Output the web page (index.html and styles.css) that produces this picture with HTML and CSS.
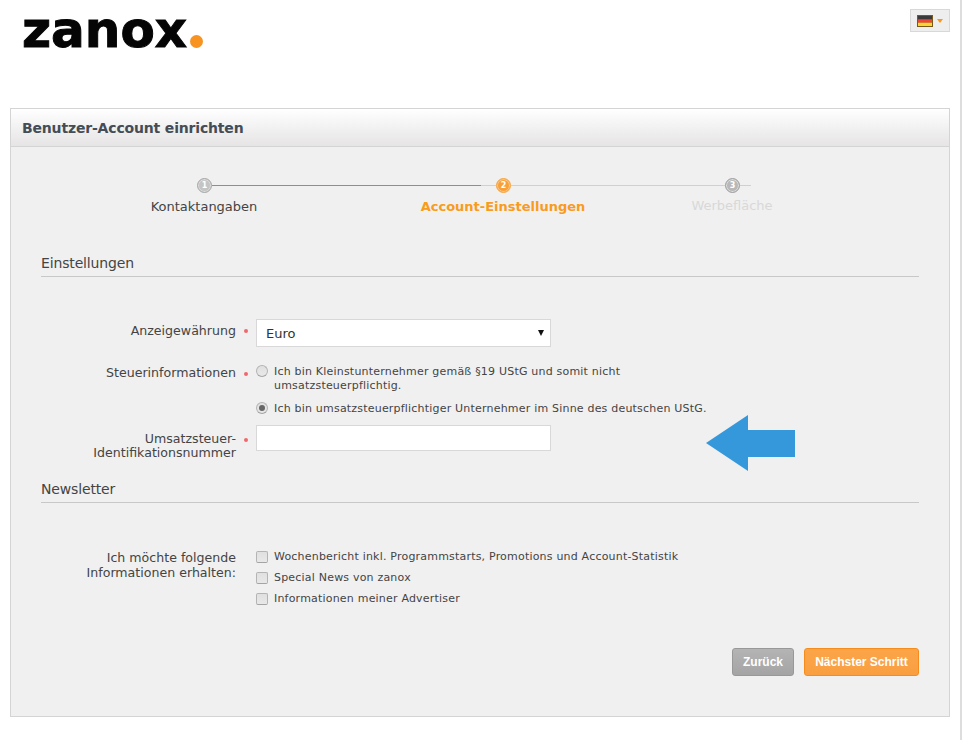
FILE: index.html
```html
<!DOCTYPE html>
<html lang="de">
<head>
<meta charset="utf-8">
<title>Benutzer-Account einrichten</title>
<link rel="stylesheet" href="styles.css">
</head>
<body>
<div class="page">
  <header class="top">
    <div class="logo"><span class="logo-word">zanox</span><span class="logo-dot"></span></div>
    <button class="lang" type="button" aria-label="Deutsch">
      <svg class="flag" width="16" height="12" viewBox="0 0 16 12">
        <rect width="16" height="12" fill="#7a5a1c"/>
        <rect x="1" y="1" width="14" height="3.4" fill="#3a3a3a"/>
        <rect x="1" y="4.4" width="14" height="3.3" fill="#f04438"/>
        <rect x="1" y="7.7" width="14" height="3.3" fill="#f7d634"/>
      </svg>
      <span class="caret"></span>
    </button>
  </header>

  <main class="panel">
    <h1 class="panel-title">Benutzer-Account einrichten</h1>
    <div class="panel-body">
      <div class="track">
        <span class="dot dot-done">1</span>
        <span class="line line-done"></span>
        <span class="line line-todo line-short"></span>
        <span class="dot dot-active">2</span>
        <span class="line line-todo line-mid"></span>
        <span class="dot dot-todo">3</span>
        <span class="line line-todo line-tail"></span>
      </div>
      <div class="step-labels">
        <span class="step step-a">Kontaktangaben</span>
        <span class="step step-b">Account-Einstellungen</span>
        <span class="step step-c">Werbefläche</span>
      </div>

      <h2 class="section section-first">Einstellungen</h2>

      <div class="row row-currency">
        <div class="label">Anzeigewährung</div>
        <span class="req"></span>
        <div class="select-wrap">
          <select class="select"><option>Euro</option></select>
        </div>
      </div>

      <div class="row row-tax">
        <div class="label">Steuerinformationen</div>
        <span class="req"></span>
        <div class="options">
          <label class="option"><input class="radio" type="radio" name="tax"><span>Ich bin Kleinstunternehmer gemäß §19 UStG und somit nicht<br>umsatzsteuerpflichtig.</span></label>
          <label class="option"><input class="radio" type="radio" name="tax" checked><span>Ich bin umsatzsteuerpflichtiger Unternehmer im Sinne des deutschen UStG.</span></label>
        </div>
      </div>

      <div class="row row-vat">
        <div class="label">Umsatzsteuer-<br>Identifikationsnummer</div>
        <span class="req"></span>
        <input class="text" type="text">
      </div>

      <h2 class="section section-news">Newsletter</h2>

      <div class="row row-news">
        <div class="label">Ich möchte folgende<br>Informationen erhalten:</div>
        <span class="req-empty"></span>
        <div class="checks">
          <label class="option"><input class="check" type="checkbox"><span>Wochenbericht inkl. Programmstarts, Promotions und Account-Statistik</span></label>
          <label class="option"><input class="check" type="checkbox"><span>Special News von zanox</span></label>
          <label class="option"><input class="check" type="checkbox"><span>Informationen meiner Advertiser</span></label>
        </div>
      </div>

      <div class="actions">
        <button class="btn btn-back" type="button">Zurück</button>
        <button class="btn btn-next" type="button">Nächster Schritt</button>
      </div>
    </div>
  </main>

  <svg class="arrow" width="90" height="57" viewBox="0 0 90 57">
    <polygon points="0,28 42,0 42,15 89,15 89,42 42,42 42,56" fill="#3498db"/>
  </svg>
</div>
</body>
</html>
```

FILE: styles.css
```css
* { box-sizing: border-box; }

html, body {
  margin: 0;
  padding: 0;
  background: #fff;
}

body {
  font-family: "DejaVu Sans", Verdana, sans-serif;
  color: #444;
}

.page {
  position: relative;
  width: 962px;
  height: 740px;
  border-right: 2px solid #ddd;
  overflow: hidden;
}

.top {
  height: 108px;
  display: flex;
  justify-content: space-between;
  align-items: flex-start;
  padding: 9px 10px 0 22px;
}

.logo {
  display: flex;
  align-items: flex-start;
  margin-top: -4px;
}

.logo-word {
  font-family: "DejaVu Sans", sans-serif;
  font-weight: 700;
  font-size: 50px;
  line-height: 50px;
  color: #050505;
  -webkit-text-stroke: 1px #050505;
  letter-spacing: 0;
}

.logo-dot {
  width: 13px;
  height: 13px;
  margin: 30px 0 0 3px;
  border-radius: 50%;
  background: #f7931e;
}

.lang {
  width: 40px;
  height: 23px;
  padding: 0 0 0 6px;
  display: flex;
  align-items: center;
  gap: 4px;
  background: #eee;
  border: 1px solid #d8d8d8;
}

.flag { display: block; }

.caret {
  width: 0;
  height: 0;
  border-style: solid;
  border-width: 4px 3.5px 0;
  border-color: #f79a1e transparent transparent;
}

.panel {
  width: 940px;
  height: 609px;
  margin-left: 10px;
  background: #f0f0f0;
  border: 1px solid #d4d4d4;
}

.panel-title {
  height: 38px;
  margin: 0;
  padding: 0 11px;
  font-size: 14px;
  font-weight: 700;
  line-height: 38px;
  letter-spacing: -0.17px;
  color: #444c56;
  background: linear-gradient(#ffffff, #e6e4e4);
  border-bottom: 1px solid #d4d4d4;
}

.panel-body {
  padding: 31px 30px 0;
}

.track {
  display: flex;
  align-items: center;
  height: 15px;
  margin-left: 156px;
}

.dot {
  flex: none;
  width: 15px;
  height: 15px;
  border-radius: 50%;
  border: 1px solid #a8a8a8;
  background: #c4c4c4;
  box-shadow: inset 0 0 0 1px #dedede;
  color: #fff;
  font-size: 8px;
  font-weight: 700;
  line-height: 13px;
  text-align: center;
}

.dot-active {
  border-color: #f5a84a;
  background: #fa9f36;
  box-shadow: inset 0 0 0 1px #fcc98a;
}

.dot-todo {
  background: #b8b8b8;
  border-color: #a0a0a0;
}

.line { height: 1px; flex: none; }
.line-done { width: 269px; background: #8e8e8e; }
.line-todo { background: #d0d0d0; }
.line-short { width: 15px; }
.line-mid { width: 214px; }
.line-tail { width: 11px; }

.step-labels {
  display: flex;
  height: 20px;
  margin: 4px 0 0 63px;
  font-size: 13px;
  line-height: 20px;
}

.step {
  display: block;
  text-align: center;
  white-space: nowrap;
}

.step-a { width: 200px; color: #444; }
.step-b { width: 200px; margin-left: 99px; color: #f99b1c; font-weight: 700; }
.step-c { width: 140px; margin-left: 59px; color: #d8d8d8; margin-top: -1px; }

.section {
  margin: 0;
  height: 24px;
  width: 878px;
  font-size: 14px;
  font-weight: 400;
  line-height: 20px;
  letter-spacing: -0.15px;
  color: #444;
  border-bottom: 1px solid #c8c8c8;
}

.section-first { margin-top: 36px; }
.section-news { margin-top: 19px; }

.row {
  display: grid;
  grid-template-columns: 195px 20px 1fr;
}

.row-currency { margin-top: 42px; }
.row-tax { margin-top: 18px; }
.row-vat { margin-top: 9px; }
.row-news { margin-top: 47px; }

.label {
  font-size: 12.6px;
  line-height: 15px;
  text-align: right;
  color: #444;
}

.row-currency .label { padding-top: 4px; }
.row-vat .label { padding-top: 7px; line-height: 14px; }

.req {
  width: 4px;
  height: 4px;
  margin: 10px 0 0 8px;
  border-radius: 50%;
  background: #f0686c;
}

.row-tax .req { margin-top: 7px; }
.row-vat .req { margin-top: 13px; }

.select-wrap {
  position: relative;
  width: 295px;
  height: 28px;
}

.select-wrap::after {
  content: "";
  position: absolute;
  right: 7px;
  top: 11px;
  border-style: solid;
  border-width: 6px 3.5px 0;
  border-color: #111 transparent transparent;
}

.select {
  appearance: none;
  -webkit-appearance: none;
  display: block;
  width: 100%;
  height: 100%;
  padding: 0 0 0 9px;
  background: #fff;
  border: 1px solid #d8d8d8;
  border-radius: 0;
  font-family: inherit;
  font-size: 13px;
  color: #333;
}

.text {
  display: block;
  width: 295px;
  height: 26px;
  background: #fff;
  border: 1px solid #d8d8d8;
  border-radius: 0;
}

.options {
  display: flex;
  flex-direction: column;
  gap: 9px;
}

.checks {
  display: flex;
  flex-direction: column;
  gap: 7px;
}

.option {
  display: flex;
  align-items: flex-start;
  gap: 6px;
  font-size: 11px;
  line-height: 14px;
  letter-spacing: 0.2px;
  color: #444;
}

.radio, .check {
  appearance: none;
  -webkit-appearance: none;
  flex: none;
  width: 12px;
  height: 12px;
  margin: 0;
  background: linear-gradient(#e0e0e0, #e8e8e8);
  border: 1px solid #b4b4b4;
  border-bottom-color: #a4a4a4;
}

.radio {
  position: relative;
  border-radius: 50%;
}

.radio:checked::after {
  content: "";
  position: absolute;
  left: 2px;
  top: 2px;
  width: 6px;
  height: 6px;
  border-radius: 50%;
  background: #666;
}

.check {
  margin-top: 1px;
  border-radius: 2px;
}

.actions {
  display: flex;
  justify-content: flex-end;
  gap: 10px;
  width: 878px;
  margin-top: 42px;
}

.btn {
  height: 28px;
  padding: 0;
  border-radius: 3px;
  font-family: "Liberation Sans", Arial, sans-serif;
  font-size: 12px;
  font-weight: 700;
  color: #fff;
}

.btn-back {
  width: 62px;
  background: linear-gradient(#b4b4b4, #a4a4a4);
  border: 1px solid #989898;
}

.btn-next {
  width: 115px;
  background: linear-gradient(#fba548, #f99f42);
  border: 1px solid #f58c1c;
}

.arrow {
  position: absolute;
  left: 706px;
  top: 415px;
}
```
